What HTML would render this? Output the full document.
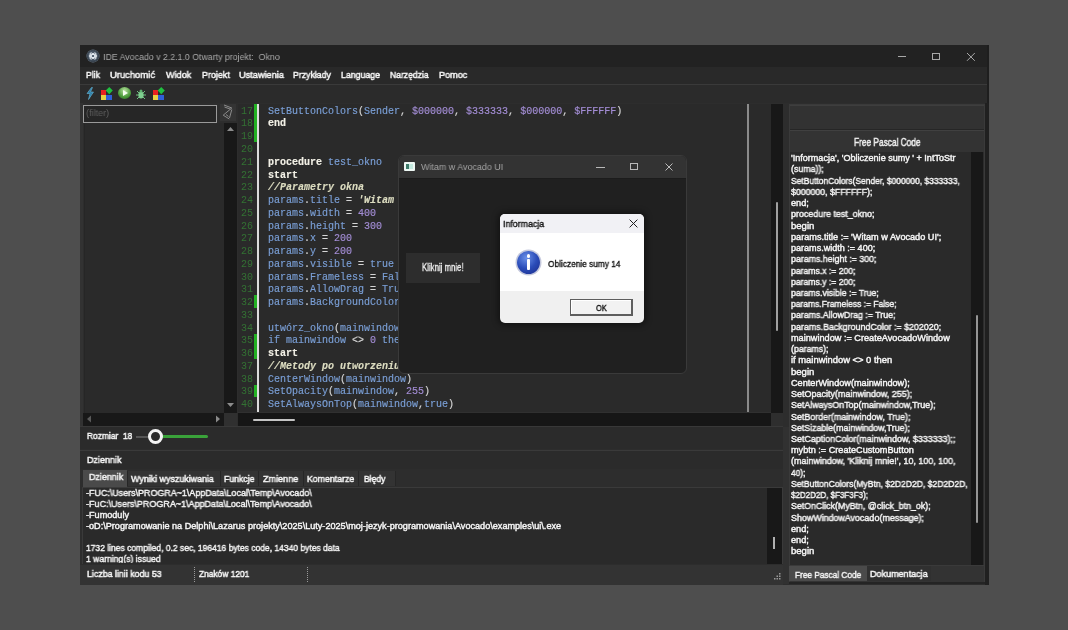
<!DOCTYPE html>
<html><head><meta charset="utf-8">
<style>
*{margin:0;padding:0;box-sizing:border-box}
html,body{width:1068px;height:630px;overflow:hidden;background:#4e4e4e;font-family:"Liberation Sans",sans-serif;}
.a{position:absolute}
.t{position:absolute;white-space:pre;line-height:1;transform-origin:0 0;will-change:transform}
.i{color:#7a9fd6}.k{color:#f2f0e6;font-weight:bold}.n{color:#a48ed6}.c{color:#dcdcc0;font-style:italic;font-weight:bold}.p{color:#d6d6d6}
</style></head><body>
<div class="a" style="left:80px;top:45px;width:909px;height:539.5px;background:#2d2d2d;"></div>
<div class="a" style="left:80px;top:45px;width:909px;height:22px;background:#222222;"></div>
<div class="a" style="left:86.8px;top:50.4px;width:12px;height:12px;border-radius:50%;background:radial-gradient(circle at 45% 45%,#5b6b7b,#2a3440);box-shadow:0 0 0 0.5px #6a7a8a"></div>
<svg class="a" style="left:86.8px;top:50.4px" width="12" height="12" viewBox="0 0 12 12"><g fill="none" stroke="#e8eef4" stroke-width="0.9"><ellipse cx="6" cy="6" rx="4" ry="1.6" transform="rotate(45 6 6)"/><ellipse cx="6" cy="6" rx="4" ry="1.6" transform="rotate(-45 6 6)"/><ellipse cx="6" cy="6" rx="4" ry="1.6"/></g></svg>
<div class="t" style="left:103px;top:52.12px;font-family:'Liberation Sans';font-size:9.5px;color:#a8a8a8;font-weight:normal;font-style:normal;transform:scaleX(0.9247);-webkit-text-stroke:0px;">IDE Avocado v 2.2.1.0 Otwarty projekt:  Okno</div>
<div class="a" style="left:898.4px;top:56.2px;width:7.6px;height:0.9px;background:#a8a8a8;"></div>
<div class="a" style="left:931.7px;top:52.7px;width:8px;height:7.6px;border:1px solid #a8a8a8"></div>
<svg class="a" style="left:966px;top:52px" width="10" height="10" viewBox="0 0 10 10"><path d="M1 1L8.8 8.8M8.8 1L1 8.8" stroke="#a8a8a8" stroke-width="1"/></svg>
<div class="a" style="left:80px;top:67px;width:909px;height:16.5px;background:#292929;"></div>
<div class="a" style="left:80px;top:83.5px;width:909px;height:1.0px;background:#3a3a3a;"></div>
<div class="t" style="left:86.0px;top:70.45px;font-family:'Liberation Sans';font-size:9.7px;color:#f6f6f6;font-weight:normal;font-style:normal;transform:scaleX(0.8960);-webkit-text-stroke:0.5px currentColor;">Plik</div>
<div class="t" style="left:110.3px;top:70.45px;font-family:'Liberation Sans';font-size:9.7px;color:#f6f6f6;font-weight:normal;font-style:normal;transform:scaleX(0.9720);-webkit-text-stroke:0.5px currentColor;">Uruchomić</div>
<div class="t" style="left:165.60000000000002px;top:70.45px;font-family:'Liberation Sans';font-size:9.7px;color:#f6f6f6;font-weight:normal;font-style:normal;transform:scaleX(0.9398);-webkit-text-stroke:0.5px currentColor;">Widok</div>
<div class="t" style="left:201.5px;top:70.45px;font-family:'Liberation Sans';font-size:9.7px;color:#f6f6f6;font-weight:normal;font-style:normal;transform:scaleX(0.9219);-webkit-text-stroke:0.5px currentColor;">Projekt</div>
<div class="t" style="left:239.3px;top:70.45px;font-family:'Liberation Sans';font-size:9.7px;color:#f6f6f6;font-weight:normal;font-style:normal;transform:scaleX(0.9474);-webkit-text-stroke:0.5px currentColor;">Ustawienia</div>
<div class="t" style="left:292.8px;top:70.45px;font-family:'Liberation Sans';font-size:9.7px;color:#f6f6f6;font-weight:normal;font-style:normal;transform:scaleX(0.9000);-webkit-text-stroke:0.5px currentColor;">Przykłady</div>
<div class="t" style="left:341.2px;top:70.45px;font-family:'Liberation Sans';font-size:9.7px;color:#f6f6f6;font-weight:normal;font-style:normal;transform:scaleX(0.9047);-webkit-text-stroke:0.5px currentColor;">Language</div>
<div class="t" style="left:390.3px;top:70.45px;font-family:'Liberation Sans';font-size:9.7px;color:#f6f6f6;font-weight:normal;font-style:normal;transform:scaleX(0.8848);-webkit-text-stroke:0.5px currentColor;">Narzędzia</div>
<div class="t" style="left:439.0px;top:70.45px;font-family:'Liberation Sans';font-size:9.7px;color:#f6f6f6;font-weight:normal;font-style:normal;transform:scaleX(0.9384);-webkit-text-stroke:0.5px currentColor;">Pomoc</div>
<div class="a" style="left:80px;top:84.5px;width:909px;height:18.0px;background:#2b2b2b;"></div>
<svg class="a" style="left:85px;top:87px" width="10" height="13" viewBox="0 0 10 13"><path d="M6.5 0.5L2 6.5H5L3.5 12.5L8.5 5H5.5L7.5 0.5Z" fill="#2f7fa8" stroke="#6ab8d8" stroke-width="0.6"/></svg>
<div class="a" style="left:101px;top:89.5px;width:5px;height:5px;background:#e82020"></div><div class="a" style="left:101px;top:94.5px;width:5px;height:5px;background:#e8d040"></div><div class="a" style="left:106px;top:94.5px;width:5.5px;height:5px;background:#2f5fd8"></div><div class="a" style="left:106.5px;top:88.0px;width:4.5px;height:4.5px;background:#20c040;transform:rotate(45deg)"></div>
<div class="a" style="left:153px;top:89.5px;width:5px;height:5px;background:#e82020"></div><div class="a" style="left:153px;top:94.5px;width:5px;height:5px;background:#e8d040"></div><div class="a" style="left:158px;top:94.5px;width:5.5px;height:5px;background:#2f5fd8"></div><div class="a" style="left:158.5px;top:88.0px;width:4.5px;height:4.5px;background:#20c040;transform:rotate(45deg)"></div>
<div class="a" style="left:118px;top:87px;width:13px;height:11.5px;border-radius:50%;background:radial-gradient(circle at 50% 30%,#b8e0a0,#4a9a3a 60%,#2a6a20)"></div>
<svg class="a" style="left:121px;top:89px" width="8" height="8" viewBox="0 0 8 8"><path d="M2 1L7 4L2 7Z" fill="#f4fff0"/></svg>
<svg class="a" style="left:135px;top:88px" width="12" height="12" viewBox="0 0 12 12"><g stroke="#6fc080" stroke-width="1"><path d="M2 3L4 5M10 3L8 5M1 7H4M11 7H8M2 11L4 9M10 11L8 9"/></g><ellipse cx="6" cy="7" rx="2.6" ry="3.6" fill="#7fd090"/><circle cx="6" cy="3" r="1.5" fill="#60b070"/></svg>
<div class="a" style="left:80px;top:102.5px;width:158px;height:323.5px;background:#2d2d2d;"></div>
<div class="a" style="left:80px;top:102.5px;width:3.2px;height:323.5px;background:#323232;"></div>
<div class="a" style="left:83.4px;top:104.6px;width:133.8px;height:18.3px;border:1.5px solid #9a9a9a;background:#262626"></div>
<div class="t" style="left:86.2px;top:108.33px;font-family:'Liberation Sans';font-size:9.5px;color:#5e5e5e;font-weight:normal;font-style:normal;transform:scaleX(0.9555);-webkit-text-stroke:0px;">(filter)</div>
<div class="a" style="left:219.9px;top:104px;width:16.6px;height:17px;background:#343434;"></div>
<svg class="a" style="left:219px;top:102px" width="18" height="20" viewBox="0 0 18 20"><g fill="none" stroke="#8c8c8c" stroke-width="1" stroke-linejoin="round"><path d="M5 3L12.8 6L4.2 13.2L10.3 17"/><path d="M5.5 5L11.5 7.2"/><path d="M12.8 7.5L10.5 16"/><path d="M7 12.5L9.5 14.5"/></g></svg>
<div class="a" style="left:83.5px;top:123px;width:1.5px;height:289.5px;background:#262626;"></div>
<div class="a" style="left:85px;top:123px;width:139px;height:289.5px;background:#2a2a2a;"></div>
<div class="a" style="left:224px;top:122.5px;width:13px;height:290.0px;background:#181818;"></div>
<svg class="a" style="left:225px;top:124px" width="11" height="10" viewBox="0 0 11 10"><path d="M2 7L5.5 3L9 7Z" fill="#8c8c8c"/></svg>
<svg class="a" style="left:225px;top:400px" width="11" height="10" viewBox="0 0 11 10"><path d="M2 3L5.5 7L9 3Z" fill="#8c8c8c"/></svg>
<div class="a" style="left:83px;top:412.5px;width:141px;height:13.0px;background:#181818;"></div>
<div class="a" style="left:224px;top:412.5px;width:13px;height:13.0px;background:#303030;"></div>
<svg class="a" style="left:84px;top:413px" width="10" height="12" viewBox="0 0 10 12"><path d="M7 2.5L3 6L7 9.5Z" fill="#5a5a5a"/></svg>
<svg class="a" style="left:213px;top:413px" width="10" height="12" viewBox="0 0 10 12"><path d="M3 2.5L7 6L3 9.5Z" fill="#8a8a8a"/></svg>
<div class="a" style="left:238px;top:103.8px;width:533px;height:309.1px;background:#2a2a2a;"></div>
<div class="a" style="left:238px;top:103.8px;width:16px;height:309.1px;background:#2a2a2a;"></div>
<div class="a" style="left:254px;top:104px;width:3px;height:38.1px;background:#22b022;"></div>
<div class="a" style="left:254px;top:295.4px;width:3px;height:12.6px;background:#22b022;"></div>
<div class="a" style="left:254px;top:333.6px;width:3px;height:25.4px;background:#22b022;"></div>
<div class="a" style="left:254px;top:384.7px;width:3px;height:12.5px;background:#22b022;"></div>
<div class="a" style="left:257px;top:103.8px;width:1.5px;height:309.1px;background:#dcdcdc;"></div>
<div class="a" style="left:746.8px;top:103.8px;width:2.2px;height:309.1px;background:#8a8a8a;"></div>
<div class="a" style="left:771px;top:103.8px;width:11.5px;height:309.1px;background:#181818;"></div>
<div class="a" style="left:775.9px;top:202px;width:2.1px;height:128.5px;background:#a0a0a0;border-radius:1px"></div>
<div class="a" style="left:238px;top:412.9px;width:532.5px;height:12.8px;background:#161616;"></div>
<div class="a" style="left:238px;top:412.4px;width:532.5px;height:0.8px;background:#303030;"></div>
<div class="a" style="left:770.5px;top:412.9px;width:12.0px;height:12.8px;background:#2e2e2e;"></div>
<div class="a" style="left:253px;top:419px;width:42px;height:2px;background:#c4c4c4;border-radius:1px"></div>
<div class="t" style="left:241px;top:106.70px;font-family:'Liberation Mono';font-size:10px;color:#337233;font-weight:normal;font-style:normal;">17</div>
<div class="t" style="left:241px;top:119.46px;font-family:'Liberation Mono';font-size:10px;color:#337233;font-weight:normal;font-style:normal;">18</div>
<div class="t" style="left:241px;top:132.22px;font-family:'Liberation Mono';font-size:10px;color:#337233;font-weight:normal;font-style:normal;">19</div>
<div class="t" style="left:241px;top:144.98px;font-family:'Liberation Mono';font-size:10px;color:#337233;font-weight:normal;font-style:normal;">20</div>
<div class="t" style="left:241px;top:157.74px;font-family:'Liberation Mono';font-size:10px;color:#337233;font-weight:normal;font-style:normal;">21</div>
<div class="t" style="left:241px;top:170.50px;font-family:'Liberation Mono';font-size:10px;color:#337233;font-weight:normal;font-style:normal;">22</div>
<div class="t" style="left:241px;top:183.26px;font-family:'Liberation Mono';font-size:10px;color:#337233;font-weight:normal;font-style:normal;">23</div>
<div class="t" style="left:241px;top:196.02px;font-family:'Liberation Mono';font-size:10px;color:#337233;font-weight:normal;font-style:normal;">24</div>
<div class="t" style="left:241px;top:208.78px;font-family:'Liberation Mono';font-size:10px;color:#337233;font-weight:normal;font-style:normal;">25</div>
<div class="t" style="left:241px;top:221.54px;font-family:'Liberation Mono';font-size:10px;color:#337233;font-weight:normal;font-style:normal;">26</div>
<div class="t" style="left:241px;top:234.30px;font-family:'Liberation Mono';font-size:10px;color:#337233;font-weight:normal;font-style:normal;">27</div>
<div class="t" style="left:241px;top:247.06px;font-family:'Liberation Mono';font-size:10px;color:#337233;font-weight:normal;font-style:normal;">28</div>
<div class="t" style="left:241px;top:259.82px;font-family:'Liberation Mono';font-size:10px;color:#337233;font-weight:normal;font-style:normal;">29</div>
<div class="t" style="left:241px;top:272.58px;font-family:'Liberation Mono';font-size:10px;color:#337233;font-weight:normal;font-style:normal;">30</div>
<div class="t" style="left:241px;top:285.34px;font-family:'Liberation Mono';font-size:10px;color:#337233;font-weight:normal;font-style:normal;">31</div>
<div class="t" style="left:241px;top:298.10px;font-family:'Liberation Mono';font-size:10px;color:#337233;font-weight:normal;font-style:normal;">32</div>
<div class="t" style="left:241px;top:310.86px;font-family:'Liberation Mono';font-size:10px;color:#337233;font-weight:normal;font-style:normal;">33</div>
<div class="t" style="left:241px;top:323.62px;font-family:'Liberation Mono';font-size:10px;color:#337233;font-weight:normal;font-style:normal;">34</div>
<div class="t" style="left:241px;top:336.38px;font-family:'Liberation Mono';font-size:10px;color:#337233;font-weight:normal;font-style:normal;">35</div>
<div class="t" style="left:241px;top:349.14px;font-family:'Liberation Mono';font-size:10px;color:#337233;font-weight:normal;font-style:normal;">36</div>
<div class="t" style="left:241px;top:361.90px;font-family:'Liberation Mono';font-size:10px;color:#337233;font-weight:normal;font-style:normal;">37</div>
<div class="t" style="left:241px;top:374.66px;font-family:'Liberation Mono';font-size:10px;color:#337233;font-weight:normal;font-style:normal;">38</div>
<div class="t" style="left:241px;top:387.42px;font-family:'Liberation Mono';font-size:10px;color:#337233;font-weight:normal;font-style:normal;">39</div>
<div class="t" style="left:241px;top:400.18px;font-family:'Liberation Mono';font-size:10px;color:#337233;font-weight:normal;font-style:normal;">40</div>
<div class="t" style="left:267.5px;top:106.70px;font-family:'Liberation Mono';font-size:10px;color:#d6d6d6;font-weight:normal;font-style:normal;-webkit-text-stroke:0.15px currentColor;"><span class="i">SetButtonColors</span><span class="p">(</span><span class="i">Sender</span><span class="p">, </span><span class="n">$000000</span><span class="p">, </span><span class="n">$333333</span><span class="p">, </span><span class="n">$000000</span><span class="p">, </span><span class="n">$FFFFFF</span><span class="p">)</span></div>
<div class="t" style="left:267.5px;top:119.46px;font-family:'Liberation Mono';font-size:10px;color:#d6d6d6;font-weight:normal;font-style:normal;-webkit-text-stroke:0.15px currentColor;"><span class="k">end</span></div>
<div class="t" style="left:267.5px;top:157.74px;font-family:'Liberation Mono';font-size:10px;color:#d6d6d6;font-weight:normal;font-style:normal;-webkit-text-stroke:0.15px currentColor;"><span class="k">procedure</span><span class="p"> </span><span class="i">test_okno</span></div>
<div class="t" style="left:267.5px;top:170.50px;font-family:'Liberation Mono';font-size:10px;color:#d6d6d6;font-weight:normal;font-style:normal;-webkit-text-stroke:0.15px currentColor;"><span class="k">start</span></div>
<div class="t" style="left:267.5px;top:183.26px;font-family:'Liberation Mono';font-size:10px;color:#d6d6d6;font-weight:normal;font-style:normal;-webkit-text-stroke:0.15px currentColor;"><span class="c">//Parametry okna</span></div>
<div class="t" style="left:267.5px;top:196.02px;font-family:'Liberation Mono';font-size:10px;color:#d6d6d6;font-weight:normal;font-style:normal;-webkit-text-stroke:0.15px currentColor;"><span class="i">params</span><span class="p">.</span><span class="i">title</span><span class="p"> = </span><span class="c">'Witam w Avocado UI'</span></div>
<div class="t" style="left:267.5px;top:208.78px;font-family:'Liberation Mono';font-size:10px;color:#d6d6d6;font-weight:normal;font-style:normal;-webkit-text-stroke:0.15px currentColor;"><span class="i">params</span><span class="p">.</span><span class="i">width</span><span class="p"> = </span><span class="n">400</span></div>
<div class="t" style="left:267.5px;top:221.54px;font-family:'Liberation Mono';font-size:10px;color:#d6d6d6;font-weight:normal;font-style:normal;-webkit-text-stroke:0.15px currentColor;"><span class="i">params</span><span class="p">.</span><span class="i">height</span><span class="p"> = </span><span class="n">300</span></div>
<div class="t" style="left:267.5px;top:234.30px;font-family:'Liberation Mono';font-size:10px;color:#d6d6d6;font-weight:normal;font-style:normal;-webkit-text-stroke:0.15px currentColor;"><span class="i">params</span><span class="p">.</span><span class="i">x</span><span class="p"> = </span><span class="n">200</span></div>
<div class="t" style="left:267.5px;top:247.06px;font-family:'Liberation Mono';font-size:10px;color:#d6d6d6;font-weight:normal;font-style:normal;-webkit-text-stroke:0.15px currentColor;"><span class="i">params</span><span class="p">.</span><span class="i">y</span><span class="p"> = </span><span class="n">200</span></div>
<div class="t" style="left:267.5px;top:259.82px;font-family:'Liberation Mono';font-size:10px;color:#d6d6d6;font-weight:normal;font-style:normal;-webkit-text-stroke:0.15px currentColor;"><span class="i">params</span><span class="p">.</span><span class="i">visible</span><span class="p"> = </span><span class="i">true</span></div>
<div class="t" style="left:267.5px;top:272.58px;font-family:'Liberation Mono';font-size:10px;color:#d6d6d6;font-weight:normal;font-style:normal;-webkit-text-stroke:0.15px currentColor;"><span class="i">params</span><span class="p">.</span><span class="i">Frameless</span><span class="p"> = </span><span class="i">False</span></div>
<div class="t" style="left:267.5px;top:285.34px;font-family:'Liberation Mono';font-size:10px;color:#d6d6d6;font-weight:normal;font-style:normal;-webkit-text-stroke:0.15px currentColor;"><span class="i">params</span><span class="p">.</span><span class="i">AllowDrag</span><span class="p"> = </span><span class="i">True</span></div>
<div class="t" style="left:267.5px;top:298.10px;font-family:'Liberation Mono';font-size:10px;color:#d6d6d6;font-weight:normal;font-style:normal;-webkit-text-stroke:0.15px currentColor;"><span class="i">params</span><span class="p">.</span><span class="i">BackgroundColor</span><span class="p"> = </span><span class="n">$202020</span></div>
<div class="t" style="left:267.5px;top:323.62px;font-family:'Liberation Mono';font-size:10px;color:#d6d6d6;font-weight:normal;font-style:normal;-webkit-text-stroke:0.15px currentColor;"><span class="i">utwórz_okno</span><span class="p">(</span><span class="i">mainwindow</span><span class="p">, </span><span class="i">params</span><span class="p">)</span></div>
<div class="t" style="left:267.5px;top:336.38px;font-family:'Liberation Mono';font-size:10px;color:#d6d6d6;font-weight:normal;font-style:normal;-webkit-text-stroke:0.15px currentColor;"><span class="i">if</span><span class="p"> </span><span class="i">mainwindow</span><span class="p"> &lt;&gt; </span><span class="n">0</span><span class="p"> </span><span class="i">then</span></div>
<div class="t" style="left:267.5px;top:349.14px;font-family:'Liberation Mono';font-size:10px;color:#d6d6d6;font-weight:normal;font-style:normal;-webkit-text-stroke:0.15px currentColor;"><span class="k">start</span></div>
<div class="t" style="left:267.5px;top:361.90px;font-family:'Liberation Mono';font-size:10px;color:#d6d6d6;font-weight:normal;font-style:normal;-webkit-text-stroke:0.15px currentColor;"><span class="c">//Metody po utworzeniu okna</span></div>
<div class="t" style="left:267.5px;top:374.66px;font-family:'Liberation Mono';font-size:10px;color:#d6d6d6;font-weight:normal;font-style:normal;-webkit-text-stroke:0.15px currentColor;"><span class="i">CenterWindow</span><span class="p">(</span><span class="i">mainwindow</span><span class="p">)</span></div>
<div class="t" style="left:267.5px;top:387.42px;font-family:'Liberation Mono';font-size:10px;color:#d6d6d6;font-weight:normal;font-style:normal;-webkit-text-stroke:0.15px currentColor;"><span class="i">SetOpacity</span><span class="p">(</span><span class="i">mainwindow</span><span class="p">, </span><span class="n">255</span><span class="p">)</span></div>
<div class="t" style="left:267.5px;top:400.18px;font-family:'Liberation Mono';font-size:10px;color:#d6d6d6;font-weight:normal;font-style:normal;-webkit-text-stroke:0.15px currentColor;"><span class="i">SetAlwaysOnTop</span><span class="p">(</span><span class="i">mainwindow</span><span class="p">,</span><span class="i">true</span><span class="p">)</span></div>
<div class="a" style="left:782.5px;top:102.5px;width:206.5px;height:482.0px;background:#2d2d2d;"></div>
<div class="a" style="left:783px;top:426.7px;width:5.5px;height:157.8px;background:#313131;"></div>
<div class="a" style="left:788.5px;top:103.5px;width:196.5px;height:478.8px;background:#3a3a3a;"></div>
<div class="a" style="left:789.5px;top:104.5px;width:194.5px;height:460.5px;background:#2c2c2c;"></div>
<div class="a" style="left:789.5px;top:104.5px;width:194.5px;height:24.8px;background:#323232;"></div>
<div class="a" style="left:789.5px;top:104.6px;width:194.5px;height:1.0px;background:#3e3e3e;"></div>
<div class="a" style="left:789.5px;top:129.3px;width:194.5px;height:1.0px;background:#262626;"></div>
<div class="a" style="left:789.5px;top:130.3px;width:194.5px;height:21.7px;background:#333333;"></div>
<div class="a" style="left:789.5px;top:130.3px;width:194.5px;height:1.0px;background:#404040;"></div>
<div class="t" style="left:853.6px;top:137.75px;font-family:'Liberation Sans';font-size:10.3px;color:#eeeeee;font-weight:normal;font-style:normal;transform:scaleX(0.8068);-webkit-text-stroke:0.5px currentColor;">Free Pascal Code</div>
<div class="a" style="left:789.5px;top:152px;width:181.2px;height:412.9px;background:#2a2a2a;"></div>
<div class="a" style="left:970.7px;top:152px;width:11.9px;height:412.9px;background:#181818;"></div>
<div class="a" style="left:975.7px;top:315px;width:2.6px;height:207.6px;background:#959595;border-radius:1px"></div>
<div class="a" style="left:985px;top:102.5px;width:4px;height:482.0px;background:#202020;"></div>
<div class="t" style="left:791.3px;top:154.25px;font-family:'Liberation Sans';font-size:9px;color:#f6f6f6;font-weight:normal;font-style:normal;transform:scaleX(1.0050);-webkit-text-stroke:0.42px currentColor;">'Informacja', 'Obliczenie sumy ' + IntToStr</div>
<div class="t" style="left:791.3px;top:165.48px;font-family:'Liberation Sans';font-size:9px;color:#f6f6f6;font-weight:normal;font-style:normal;transform:scaleX(0.9791);-webkit-text-stroke:0.42px currentColor;">(suma));</div>
<div class="t" style="left:791.3px;top:176.71px;font-family:'Liberation Sans';font-size:9px;color:#f6f6f6;font-weight:normal;font-style:normal;transform:scaleX(0.9397);-webkit-text-stroke:0.42px currentColor;">SetButtonColors(Sender, $000000, $333333,</div>
<div class="t" style="left:791.3px;top:187.94px;font-family:'Liberation Sans';font-size:9px;color:#f6f6f6;font-weight:normal;font-style:normal;transform:scaleX(0.9745);-webkit-text-stroke:0.42px currentColor;">$000000, $FFFFFF);</div>
<div class="t" style="left:791.3px;top:199.17px;font-family:'Liberation Sans';font-size:9px;color:#f6f6f6;font-weight:normal;font-style:normal;transform:scaleX(1.0210);-webkit-text-stroke:0.42px currentColor;">end;</div>
<div class="t" style="left:791.3px;top:210.40px;font-family:'Liberation Sans';font-size:9px;color:#f6f6f6;font-weight:normal;font-style:normal;transform:scaleX(0.9874);-webkit-text-stroke:0.42px currentColor;">procedure test_okno;</div>
<div class="t" style="left:791.3px;top:221.63px;font-family:'Liberation Sans';font-size:9px;color:#f6f6f6;font-weight:normal;font-style:normal;transform:scaleX(1.0576);-webkit-text-stroke:0.42px currentColor;">begin</div>
<div class="t" style="left:791.3px;top:232.86px;font-family:'Liberation Sans';font-size:9px;color:#f6f6f6;font-weight:normal;font-style:normal;transform:scaleX(1.0143);-webkit-text-stroke:0.42px currentColor;">params.title := 'Witam w Avocado UI';</div>
<div class="t" style="left:791.3px;top:244.09px;font-family:'Liberation Sans';font-size:9px;color:#f6f6f6;font-weight:normal;font-style:normal;transform:scaleX(1.0048);-webkit-text-stroke:0.42px currentColor;">params.width := 400;</div>
<div class="t" style="left:791.3px;top:255.32px;font-family:'Liberation Sans';font-size:9px;color:#f6f6f6;font-weight:normal;font-style:normal;transform:scaleX(0.9792);-webkit-text-stroke:0.42px currentColor;">params.height := 300;</div>
<div class="t" style="left:791.3px;top:266.55px;font-family:'Liberation Sans';font-size:9px;color:#f6f6f6;font-weight:normal;font-style:normal;transform:scaleX(0.9584);-webkit-text-stroke:0.42px currentColor;">params.x := 200;</div>
<div class="t" style="left:791.3px;top:277.78px;font-family:'Liberation Sans';font-size:9px;color:#f6f6f6;font-weight:normal;font-style:normal;transform:scaleX(0.9584);-webkit-text-stroke:0.42px currentColor;">params.y := 200;</div>
<div class="t" style="left:791.3px;top:289.01px;font-family:'Liberation Sans';font-size:9px;color:#f6f6f6;font-weight:normal;font-style:normal;transform:scaleX(0.9670);-webkit-text-stroke:0.42px currentColor;">params.visible := True;</div>
<div class="t" style="left:791.3px;top:300.24px;font-family:'Liberation Sans';font-size:9px;color:#f6f6f6;font-weight:normal;font-style:normal;transform:scaleX(0.9437);-webkit-text-stroke:0.42px currentColor;">params.Frameless := False;</div>
<div class="t" style="left:791.3px;top:311.47px;font-family:'Liberation Sans';font-size:9px;color:#f6f6f6;font-weight:normal;font-style:normal;transform:scaleX(0.9785);-webkit-text-stroke:0.42px currentColor;">params.AllowDrag := True;</div>
<div class="t" style="left:791.3px;top:322.70px;font-family:'Liberation Sans';font-size:9px;color:#f6f6f6;font-weight:normal;font-style:normal;transform:scaleX(0.9858);-webkit-text-stroke:0.42px currentColor;">params.BackgroundColor := $202020;</div>
<div class="t" style="left:791.3px;top:333.93px;font-family:'Liberation Sans';font-size:9px;color:#f6f6f6;font-weight:normal;font-style:normal;transform:scaleX(1.0168);-webkit-text-stroke:0.42px currentColor;">mainwindow := CreateAvocadoWindow</div>
<div class="t" style="left:791.3px;top:345.16px;font-family:'Liberation Sans';font-size:9px;color:#f6f6f6;font-weight:normal;font-style:normal;transform:scaleX(0.9736);-webkit-text-stroke:0.42px currentColor;">(params);</div>
<div class="t" style="left:791.3px;top:356.39px;font-family:'Liberation Sans';font-size:9px;color:#f6f6f6;font-weight:normal;font-style:normal;transform:scaleX(1.0426);-webkit-text-stroke:0.42px currentColor;">if mainwindow &lt;&gt; 0 then</div>
<div class="t" style="left:791.3px;top:367.62px;font-family:'Liberation Sans';font-size:9px;color:#f6f6f6;font-weight:normal;font-style:normal;transform:scaleX(1.0576);-webkit-text-stroke:0.42px currentColor;">begin</div>
<div class="t" style="left:791.3px;top:378.85px;font-family:'Liberation Sans';font-size:9px;color:#f6f6f6;font-weight:normal;font-style:normal;transform:scaleX(1.0150);-webkit-text-stroke:0.42px currentColor;">CenterWindow(mainwindow);</div>
<div class="t" style="left:791.3px;top:390.08px;font-family:'Liberation Sans';font-size:9px;color:#f6f6f6;font-weight:normal;font-style:normal;transform:scaleX(0.9970);-webkit-text-stroke:0.42px currentColor;">SetOpacity(mainwindow, 255);</div>
<div class="t" style="left:791.3px;top:401.31px;font-family:'Liberation Sans';font-size:9px;color:#f6f6f6;font-weight:normal;font-style:normal;transform:scaleX(0.9848);-webkit-text-stroke:0.42px currentColor;">SetAlwaysOnTop(mainwindow,True);</div>
<div class="t" style="left:791.3px;top:412.54px;font-family:'Liberation Sans';font-size:9px;color:#f6f6f6;font-weight:normal;font-style:normal;transform:scaleX(0.9871);-webkit-text-stroke:0.42px currentColor;">SetBorder(mainwindow, True);</div>
<div class="t" style="left:791.3px;top:423.77px;font-family:'Liberation Sans';font-size:9px;color:#f6f6f6;font-weight:normal;font-style:normal;transform:scaleX(0.9800);-webkit-text-stroke:0.42px currentColor;">SetSizable(mainwindow,True);</div>
<div class="t" style="left:791.3px;top:435.00px;font-family:'Liberation Sans';font-size:9px;color:#f6f6f6;font-weight:normal;font-style:normal;transform:scaleX(0.9903);-webkit-text-stroke:0.42px currentColor;">SetCaptionColor(mainwindow, $333333);;</div>
<div class="t" style="left:791.3px;top:446.23px;font-family:'Liberation Sans';font-size:9px;color:#f6f6f6;font-weight:normal;font-style:normal;transform:scaleX(1.0123);-webkit-text-stroke:0.42px currentColor;">mybtn := CreateCustomButton</div>
<div class="t" style="left:791.3px;top:457.46px;font-family:'Liberation Sans';font-size:9px;color:#f6f6f6;font-weight:normal;font-style:normal;transform:scaleX(0.9908);-webkit-text-stroke:0.42px currentColor;">(mainwindow, 'Kliknij mnie!', 10, 100, 100,</div>
<div class="t" style="left:791.3px;top:468.69px;font-family:'Liberation Sans';font-size:9px;color:#f6f6f6;font-weight:normal;font-style:normal;transform:scaleX(0.9281);-webkit-text-stroke:0.42px currentColor;">40);</div>
<div class="t" style="left:791.3px;top:479.92px;font-family:'Liberation Sans';font-size:9px;color:#f6f6f6;font-weight:normal;font-style:normal;transform:scaleX(0.9526);-webkit-text-stroke:0.42px currentColor;">SetButtonColors(MyBtn, $2D2D2D, $2D2D2D,</div>
<div class="t" style="left:791.3px;top:491.15px;font-family:'Liberation Sans';font-size:9px;color:#f6f6f6;font-weight:normal;font-style:normal;transform:scaleX(0.8897);-webkit-text-stroke:0.42px currentColor;">$2D2D2D, $F3F3F3);</div>
<div class="t" style="left:791.3px;top:502.38px;font-family:'Liberation Sans';font-size:9px;color:#f6f6f6;font-weight:normal;font-style:normal;transform:scaleX(0.9777);-webkit-text-stroke:0.42px currentColor;">SetOnClick(MyBtn, @click_btn_ok);</div>
<div class="t" style="left:791.3px;top:513.61px;font-family:'Liberation Sans';font-size:9px;color:#f6f6f6;font-weight:normal;font-style:normal;transform:scaleX(0.9880);-webkit-text-stroke:0.42px currentColor;">ShowWindowAvocado(message);</div>
<div class="t" style="left:791.3px;top:524.84px;font-family:'Liberation Sans';font-size:9px;color:#f6f6f6;font-weight:normal;font-style:normal;transform:scaleX(1.0210);-webkit-text-stroke:0.42px currentColor;">end;</div>
<div class="t" style="left:791.3px;top:536.07px;font-family:'Liberation Sans';font-size:9px;color:#f6f6f6;font-weight:normal;font-style:normal;transform:scaleX(1.0210);-webkit-text-stroke:0.42px currentColor;">end;</div>
<div class="t" style="left:791.3px;top:547.30px;font-family:'Liberation Sans';font-size:9px;color:#f6f6f6;font-weight:normal;font-style:normal;transform:scaleX(1.0576);-webkit-text-stroke:0.42px currentColor;">begin</div>
<div class="a" style="left:789.5px;top:565.5px;width:194.5px;height:16.8px;background:#333333;"></div>
<div class="a" style="left:788.7px;top:565.5px;width:77.9px;height:15.5px;background:#4a4a4a;"></div>
<div class="t" style="left:794.6px;top:570.22px;font-family:'Liberation Sans';font-size:9.5px;color:#f0f0f0;font-weight:normal;font-style:normal;transform:scaleX(0.8705);-webkit-text-stroke:0.5px currentColor;">Free Pascal Code</div>
<div class="a" style="left:866.6px;top:565.5px;width:64.6px;height:15.5px;background:#303030;"></div>
<div class="t" style="left:869.6px;top:568.82px;font-family:'Liberation Sans';font-size:9.5px;color:#f6f6f6;font-weight:normal;font-style:normal;transform:scaleX(0.9500);-webkit-text-stroke:0.5px currentColor;">Dokumentacja</div>
<div class="a" style="left:986.6px;top:45px;width:2.4px;height:57.5px;background:#1e1e1e;"></div>
<div class="a" style="left:788.5px;top:582.3px;width:196.5px;height:2.2px;background:#242424;"></div>
<div class="a" style="left:80px;top:425.7px;width:702.5px;height:1.0px;background:#383838;"></div>
<div class="a" style="left:80px;top:426.7px;width:702.5px;height:22.8px;background:#2b2b2b;"></div>
<div class="t" style="left:86.7px;top:431.43px;font-family:'Liberation Sans';font-size:9.5px;color:#f6f6f6;font-weight:normal;font-style:normal;transform:scaleX(0.8825);-webkit-text-stroke:0.5px currentColor;">Rozmiar  18</div>
<div class="a" style="left:136px;top:436px;width:14px;height:1.5px;background:#555555;"></div>
<div class="a" style="left:155px;top:435.3px;width:53px;height:3.0px;background:#3aa23a;border-radius:1.5px"></div>
<div class="a" style="left:147.7px;top:429.3px;width:15px;height:15px;border-radius:50%;background:#2c2c2c;border:3.5px solid #f4f4f4"></div>
<div class="a" style="left:80px;top:449.5px;width:702.5px;height:1.0px;background:#3a3a3a;"></div>
<div class="a" style="left:80px;top:450.5px;width:702.5px;height:18.9px;background:#2b2b2b;"></div>
<div class="t" style="left:86.7px;top:454.62px;font-family:'Liberation Sans';font-size:9.5px;color:#f6f6f6;font-weight:normal;font-style:normal;transform:scaleX(0.9468);-webkit-text-stroke:0.5px currentColor;">Dziennik</div>
<div class="a" style="left:80px;top:469.4px;width:702.5px;height:18.0px;background:#2d2d2d;"></div>
<div class="a" style="left:82.5px;top:470.5px;width:312.0px;height:15.5px;background:#333333;"></div>
<div class="a" style="left:82.5px;top:469.6px;width:44.9px;height:17.4px;background:#4a4a4a;"></div>
<div class="a" style="left:127.4px;top:470.5px;width:1.0px;height:15.5px;background:#262626;"></div>
<div class="a" style="left:220.3px;top:470.5px;width:1.0px;height:15.5px;background:#262626;"></div>
<div class="a" style="left:258.3px;top:470.5px;width:1.0px;height:15.5px;background:#262626;"></div>
<div class="a" style="left:302.7px;top:470.5px;width:1.0px;height:15.5px;background:#262626;"></div>
<div class="a" style="left:358px;top:470.5px;width:1px;height:15.5px;background:#262626;"></div>
<div class="a" style="left:394.5px;top:470.5px;width:1.0px;height:15.5px;background:#262626;"></div>
<div class="t" style="left:88.5px;top:472.23px;font-family:'Liberation Sans';font-size:9.5px;color:#f0f0f0;font-weight:normal;font-style:normal;transform:scaleX(0.9386);-webkit-text-stroke:0.5px currentColor;">Dziennik</div>
<div class="t" style="left:131.2px;top:474.12px;font-family:'Liberation Sans';font-size:9.5px;color:#f6f6f6;font-weight:normal;font-style:normal;transform:scaleX(0.9344);-webkit-text-stroke:0.5px currentColor;">Wyniki wyszukiwania</div>
<div class="t" style="left:223.5px;top:474.12px;font-family:'Liberation Sans';font-size:9.5px;color:#f6f6f6;font-weight:normal;font-style:normal;transform:scaleX(0.9169);-webkit-text-stroke:0.5px currentColor;">Funkcje</div>
<div class="t" style="left:262.8px;top:474.12px;font-family:'Liberation Sans';font-size:9.5px;color:#f6f6f6;font-weight:normal;font-style:normal;transform:scaleX(0.9522);-webkit-text-stroke:0.5px currentColor;">Zmienne</div>
<div class="t" style="left:307.4px;top:474.12px;font-family:'Liberation Sans';font-size:9.5px;color:#f6f6f6;font-weight:normal;font-style:normal;transform:scaleX(0.9213);-webkit-text-stroke:0.5px currentColor;">Komentarze</div>
<div class="t" style="left:363.6px;top:474.12px;font-family:'Liberation Sans';font-size:9.5px;color:#f6f6f6;font-weight:normal;font-style:normal;transform:scaleX(0.9005);-webkit-text-stroke:0.5px currentColor;">Błędy</div>
<div class="a" style="left:82px;top:487.4px;width:700.5px;height:77.1px;background:#3a3a3a;"></div>
<div class="a" style="left:83px;top:488px;width:699px;height:76.3px;background:#2a2a2a;"></div>
<div class="a" style="left:767px;top:488px;width:14.5px;height:75.5px;background:#181818;"></div>
<div class="a" style="left:773px;top:537.2px;width:2px;height:12.1px;background:#b0b0b0;"></div>
<div class="a" style="left:83px;top:488px;width:684px;height:75px;overflow:hidden">
<div class="t" style="left:2.700000000000003px;top:0.76px;font-family:'Liberation Sans';font-size:9.1px;color:#f6f6f6;font-weight:normal;font-style:normal;transform:scaleX(0.9810);-webkit-text-stroke:0.42px currentColor;">-FUC:\Users\PROGRA~1\AppData\Local\Temp\Avocado\</div>
<div class="t" style="left:2.700000000000003px;top:11.84px;font-family:'Liberation Sans';font-size:9.1px;color:#f6f6f6;font-weight:normal;font-style:normal;transform:scaleX(0.9875);-webkit-text-stroke:0.42px currentColor;">-FuC:\Users\PROGRA~1\AppData\Local\Temp\Avocado\</div>
<div class="t" style="left:2.700000000000003px;top:22.92px;font-family:'Liberation Sans';font-size:9.1px;color:#f6f6f6;font-weight:normal;font-style:normal;transform:scaleX(1.0007);-webkit-text-stroke:0.42px currentColor;">-Fumoduly</div>
<div class="t" style="left:2.700000000000003px;top:34.00px;font-family:'Liberation Sans';font-size:9.1px;color:#f6f6f6;font-weight:normal;font-style:normal;transform:scaleX(1.0013);-webkit-text-stroke:0.42px currentColor;">-oD:\Programowanie na Delphi\Lazarus projekty\2025\Luty-2025\moj-jezyk-programowania\Avocado\examples\ui\.exe</div>
<div class="t" style="left:2.700000000000003px;top:56.16px;font-family:'Liberation Sans';font-size:9.1px;color:#f6f6f6;font-weight:normal;font-style:normal;transform:scaleX(0.9341);-webkit-text-stroke:0.42px currentColor;">1732 lines compiled, 0.2 sec, 196416 bytes code, 14340 bytes data</div>
<div class="t" style="left:2.700000000000003px;top:67.24px;font-family:'Liberation Sans';font-size:9.1px;color:#f6f6f6;font-weight:normal;font-style:normal;transform:scaleX(0.9460);-webkit-text-stroke:0.42px currentColor;">1 warning(s) issued</div>
</div>
<div class="a" style="left:80px;top:564.5px;width:703px;height:20.0px;background:#333333;"></div>
<div class="t" style="left:86.5px;top:569.42px;font-family:'Liberation Sans';font-size:9.5px;color:#f6f6f6;font-weight:normal;font-style:normal;transform:scaleX(0.9292);-webkit-text-stroke:0.5px currentColor;">Liczba linii kodu 53</div>
<div class="a" style="left:194px;top:567px;width:1px;height:15px;border-left:1px dotted #9a9a9a"></div>
<div class="t" style="left:198.9px;top:569.42px;font-family:'Liberation Sans';font-size:9.5px;color:#f6f6f6;font-weight:normal;font-style:normal;transform:scaleX(0.8817);-webkit-text-stroke:0.5px currentColor;">Znaków 1201</div>
<div class="a" style="left:307px;top:567px;width:1px;height:15px;border-left:1px dotted #9a9a9a"></div>
<svg class="a" style="left:773px;top:571px" width="9" height="10" viewBox="0 0 9 10"><g fill="#9a9a9a"><rect x="6" y="2" width="1.5" height="1.5"/><rect x="3.5" y="4.5" width="1.5" height="1.5"/><rect x="6" y="4.5" width="1.5" height="1.5"/><rect x="1" y="7" width="1.5" height="1.5"/><rect x="3.5" y="7" width="1.5" height="1.5"/><rect x="6" y="7" width="1.5" height="1.5"/></g></svg>
<div class="a" style="left:397.5px;top:155.2px;width:289.2px;height:219px;background:#202020;border:1px solid #3a3a3a;border-radius:6px;overflow:hidden"><div style="position:absolute;left:0;top:0;width:100%;height:22.6px;background:#333333;border-bottom:1px solid #1c1c1c"></div></div>
<div class="a" style="left:404px;top:161.7px;width:11.4px;height:9.4px;background:#eef8f4;border-radius:1px"></div><div class="a" style="left:405.8px;top:164px;width:3.4px;height:4.6px;background:#3f7d6c"></div><div class="a" style="left:409.4px;top:164px;width:3.4px;height:4.6px;background:#c4eadf"></div>
<div class="t" style="left:420.8px;top:162.43px;font-family:'Liberation Sans';font-size:9.5px;color:#a4a4a4;font-weight:normal;font-style:normal;transform:scaleX(0.9398);-webkit-text-stroke:0px;">Witam w Avocado UI</div>
<div class="a" style="left:596.3px;top:166.6px;width:8.4px;height:1.0px;background:#b8b8b8;"></div>
<div class="a" style="left:630px;top:162.6px;width:8.4px;height:7.6px;border:1px solid #b8b8b8"></div>
<svg class="a" style="left:664.5px;top:162.5px" width="8" height="8" viewBox="0 0 8 8"><path d="M0.5 0.5L7.5 7.5M7.5 0.5L0.5 7.5" stroke="#bcbcbc" stroke-width="1"/></svg>
<div class="a" style="left:406px;top:253.4px;width:74.4px;height:30.0px;background:#2d2d2d;"></div>
<div class="t" style="left:421.9px;top:263.13px;font-family:'Liberation Sans';font-size:10.2px;color:#f3f3f3;font-weight:normal;font-style:normal;transform:scaleX(0.7653);-webkit-text-stroke:0.3px currentColor;">Kliknij mnie!</div>
<div class="a" style="left:500.4px;top:214px;width:143.9px;height:108.9px;background:#f0f0f0;border-radius:5px;box-shadow:0 0 6px 2px rgba(0,0,0,0.45);overflow:hidden"><div style="position:absolute;left:0;top:0;width:100%;height:18.7px;background:#f1f1f5"></div><div style="position:absolute;left:0;top:18.7px;width:100%;height:58.7px;background:#ffffff"></div></div>
<div class="t" style="left:503.3px;top:218.93px;font-family:'Liberation Sans';font-size:9.5px;color:#111111;font-weight:normal;font-style:normal;transform:scaleX(0.9288);-webkit-text-stroke:0.35px currentColor;">Informacja</div>
<svg class="a" style="left:628.5px;top:219px" width="9" height="9" viewBox="0 0 9 9"><path d="M0.6 0.6L8.4 8.4M8.4 0.6L0.6 8.4" stroke="#202020" stroke-width="1"/></svg>
<div class="a" style="left:517px;top:251px;width:23px;height:23px;border-radius:50%;background:radial-gradient(circle at 40% 30%,#6a90e8,#2a4cb8 50%,#1a2a88);box-shadow:0 0 0 1.5px #c4c8dc"></div>
<div class="a" style="left:526.6px;top:254px;width:3.6px;height:3.6px;border-radius:50%;background:#fff"></div><div class="a" style="left:526.8px;top:259px;width:3.2px;height:11px;background:#fff;border-radius:1px"></div>
<div class="t" style="left:547.9px;top:258.62px;font-family:'Liberation Sans';font-size:9.5px;color:#111111;font-weight:normal;font-style:normal;transform:scaleX(0.8745);-webkit-text-stroke:0.35px currentColor;">Obliczenie sumy 14</div>
<div class="a" style="left:570px;top:298.9px;width:62.6px;height:16.8px;border:1px solid #5e5e5e;border-right-width:2px;border-bottom-width:2px;background:#f2f2f2;box-shadow:inset 1px 1px 0 #ffffff"></div>
<div class="t" style="left:596.4px;top:302.62px;font-family:'Liberation Sans';font-size:9.5px;color:#111111;font-weight:normal;font-style:normal;transform:scaleX(0.7791);-webkit-text-stroke:0.4px currentColor;">OK</div>
</body></html>
